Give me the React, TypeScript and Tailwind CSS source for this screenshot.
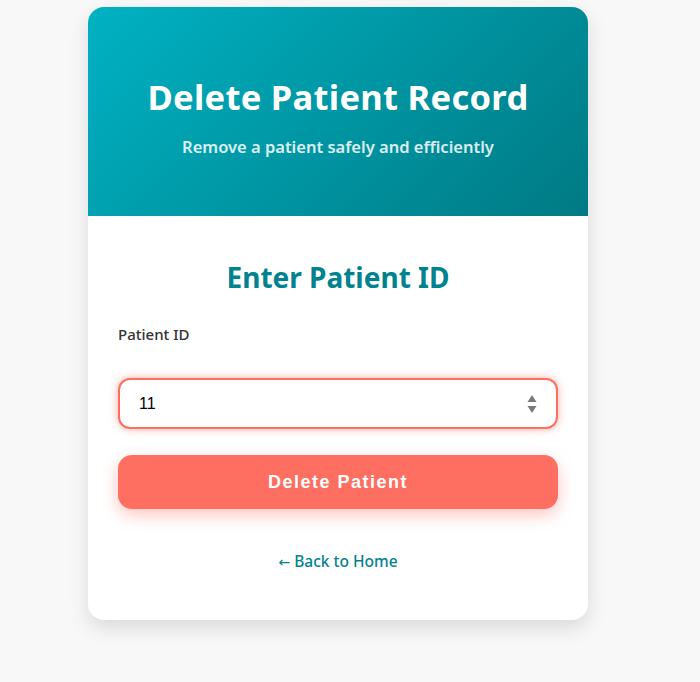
import React from "react";

export default function App() {
  return (
    <div className="min-h-[682px] w-full bg-[#f8f8f8] pt-[7px]" style={{ fontFamily: '"Noto Sans", "Open Sans", sans-serif' }}>
      <div className="ml-[88px] w-[500px] overflow-hidden rounded-[16px] bg-white shadow-[0_8px_20px_rgba(0,0,0,0.12)]">
        <div className="flex h-[209px] flex-col items-center bg-[linear-gradient(135deg,#00b2c3,#007a84)] pt-[66px]">
          <h1 className="text-[34.5px] font-bold leading-[48px] tracking-[0.3px] text-white">Delete Patient Record</h1>
          <p className="mt-[15px] text-[16.5px] font-semibold leading-[22px] text-white/85">Remove a patient safely and efficiently</p>
        </div>
        <div className="px-[30px] pb-[47px] pt-[42px]">
          <h2 className="text-center text-[28px] font-bold leading-[38px] text-[#00838f]">Enter Patient ID</h2>
          <label className="mt-[28px] block text-[15px] font-medium leading-[20px] text-[#333]">Patient ID</label>
          <div className="relative mt-[34px]">
            <input
              readOnly
              value="11"
              className="block h-[51px] w-full rounded-[12px] border-2 border-[#ff6f61] bg-white px-[19px] text-[16px] text-black shadow-[0_0_8px_rgba(255,111,97,0.55)] outline-none"
              style={{ fontFamily: '"Liberation Sans", Arial, sans-serif' }}
            />
            <svg className="absolute right-[21px] top-[16px]" width="10" height="20" viewBox="0 0 10 20">
              <path d="M5 1 L9.5 8 H0.5 Z" fill="#7a7a7a" />
              <path d="M5 19 L9.5 12 H0.5 Z" fill="#7a7a7a" />
            </svg>
          </div>
          <button
            className="mt-[26px] block h-[54px] w-full rounded-[14px] bg-[#ff6f61] text-[18px] font-bold tracking-[1.5px] text-white shadow-[0_6px_16px_rgba(255,111,97,0.4)]"
            style={{ fontFamily: '"Liberation Sans", Arial, sans-serif' }}
          >
            Delete Patient
          </button>
          <div className="mt-[40px] text-center">
            <a className="text-[15.5px] font-medium leading-[22px] text-[#00838f]">
              <span style={{ fontFamily: '"DejaVu Sans", sans-serif' }} className="text-[14px]">←</span> Back to Home
            </a>
          </div>
        </div>
      </div>
    </div>
  );
}
